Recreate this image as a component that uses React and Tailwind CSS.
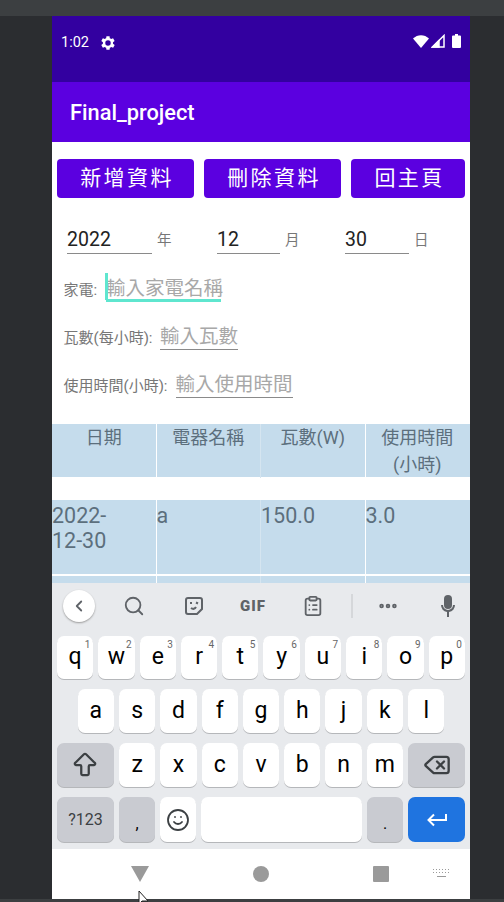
import { Search, ChevronLeft, ClipboardList, MoreHorizontal, Smile, Delete, ArrowBigUp } from "lucide-react";

const font = "font-['Roboto','Noto_Sans_CJK_TC',sans-serif]";

const row1 = [
  ["q", "1"], ["w", "2"], ["e", "3"], ["r", "4"], ["t", "5"],
  ["y", "6"], ["u", "7"], ["i", "8"], ["o", "9"], ["p", "0"],
];
const row2 = ["a", "s", "d", "f", "g", "h", "j", "k", "l"];
const row3 = ["z", "x", "c", "v", "b", "n", "m"];

function Key({ label, hint, className = "w-[36.3px]", gray, h = "h-[44px]", children }) {
  return (
    <div
      className={`relative flex items-center justify-center rounded-[7px] text-[23px] text-black shadow-[0_1px_0_#b5b7ba] ${h} ${className} ${gray ? "bg-[#c9cbd1]" : "bg-white"}`}
    >
      {label}
      {children}
      {hint && <span className="absolute right-[3px] top-[1px] text-[10px] text-[#666]">{hint}</span>}
    </div>
  );
}

function Keyboard() {
  return (
    <div className="h-[266px] bg-[#e8eaed]">
      <div className="flex h-[46px] items-center pl-[11px] text-[#5f6368]">
        <div className="flex h-[32px] w-[32px] items-center justify-center rounded-full bg-white shadow-[0_1px_2px_#9a9a9a]">
          <ChevronLeft size={18} strokeWidth={2.4} />
        </div>
        <div className="ml-[27px] flex w-[24px] justify-center"><Search size={22} strokeWidth={2} /></div>
        <div className="ml-[36px] flex w-[24px] justify-center">
          <svg width="20" height="20" viewBox="0 0 20 20" fill="none" stroke="currentColor" strokeWidth="2">
            <path d="M4 2h12a2 2 0 0 1 2 2v9l-5 5H4a2 2 0 0 1-2-2V4a2 2 0 0 1 2-2z" />
            <path d="M6 7h2M12 6.500l2 1M7 12c2 1.500 4 1 5-1" />
          </svg>
        </div>
        <div className="ml-[34px] w-[26px] text-[15px] font-black tracking-[1px]">GIF</div>
        <div className="ml-[35px] flex w-[24px] justify-center"><ClipboardList size={22} strokeWidth={2} /></div>
        <div className="ml-[26px] h-[24px] w-[2px] bg-[#d5d7da]" />
        <div className="ml-[23px] flex w-[24px] justify-center"><MoreHorizontal size={22} strokeWidth={3} /></div>
        <div className="ml-[36px] flex w-[24px] justify-center">
          <svg width="20" height="24" viewBox="0 0 20 24" fill="currentColor">
            <rect x="6" y="1" width="8" height="14" rx="4" />
            <path d="M3 11h2a5 5 0 0 0 10 0h2a7 7 0 0 1-6 7v5H9v-5a7 7 0 0 1-6-7z" />
          </svg>
        </div>
      </div>
      <div className="mt-[7px] flex flex-col gap-[10px]">
        <div className="flex gap-[5px] px-[5px]">
          {row1.map(([l, n]) => <Key key={l} label={l} hint={n} className="flex-1" h="h-[43px]" />)}
        </div>
        <div className="flex justify-center gap-[5px]">
          {row2.map((l) => <Key key={l} label={l} />)}
        </div>
        <div className="flex gap-[5px] px-[5px]">
          <Key gray className="w-[57px]">
            <ArrowBigUp size={30} strokeWidth={1.8} className="text-[#3c4043]" />
          </Key>
          {row3.map((l) => <Key key={l} label={l} />)}
          <Key gray className="w-[57px]">
            <Delete size={28} strokeWidth={2} className="text-[#3c4043]" />
          </Key>
        </div>
        <div className="flex gap-[5px] px-[5px]">
          <Key gray className="w-[57px] !text-[16px] !text-[#3c4043]" h="h-[45px]" label="?123" />
          <Key gray label="," h="h-[45px]" className="w-[36.3px] items-end pb-[6px] !text-[16px]" />
          <Key h="h-[45px]"><Smile size={24} strokeWidth={1.8} className="text-[#3c4043]" /></Key>
          <Key h="h-[45px]" className="w-[161px]" />
          <Key gray label="." h="h-[45px]" className="w-[36.3px] items-end pb-[6px] !text-[16px]" />
          <div className="flex h-[45px] w-[57px] items-center justify-center rounded-[7px] bg-[#1f74e0] text-white">
            <svg width="21" height="14" viewBox="0 0 21 14" fill="none" stroke="currentColor" strokeWidth="2">
              <path d="M20 1v6H3M8 1.500 2.500 7 8 12.500" />
            </svg>
          </div>
        </div>
      </div>
    </div>
  );
}

function TextRow({ label, placeholder, inputW, labelW, focused, className }) {
  return (
    <div className={`flex items-center ${className}`}>
      <span className={`mt-[6px] text-[15px] leading-[20px] text-[#777] ${labelW}`}>{label}</span>
      <div
        className={`relative flex h-[30px] items-center whitespace-nowrap text-[19.500px] text-[#a8a8a8] ${inputW} ${
          focused ? "border-b-[3px] border-[#5fe6cf] pt-[6px]" : "border-b border-[#8a8a8a] pt-[4px]"
        }`}
      >
        {placeholder}
        {focused && <span className="absolute -bottom-[1px] -left-[1px] h-[27px] w-[3px] bg-[#5fe6cf]" />}
      </div>
    </div>
  );
}

const cellLine = ["border-white", "border-[#d5e5f0]", "border-white", "border-transparent"];

export default function App() {
  return (
    <div className={`relative h-[902px] w-[504px] overflow-hidden bg-[#2b2d30] ${font}`}>
      <div className="h-[16px] bg-[#3c3f41]" />
      <div className="mx-[52px] flex h-[883px] w-[418px] flex-col bg-white">
        {/* status bar */}
        <div className="flex h-[66px] shrink-0 items-start bg-[#3300a0] px-[9px] pt-[18px] text-white">
          <span className="text-[14.500px] leading-[18px]">1:02</span>
          <svg className="ml-[12px] mt-[2px]" width="14" height="14" viewBox="4 3 18 18" fill="currentColor">
            <path d="M19.400 13a7.500 7.500 0 0 0 0-2l2.100-1.600-2-3.500-2.500 1a7.500 7.500 0 0 0-1.700-1L15 3.200h-4l-.4 2.700a7.500 7.500 0 0 0-1.700 1l-2.500-1-2 3.500L6.500 11a7.500 7.500 0 0 0 0 2l-2.100 1.600 2 3.500 2.500-1a7.500 7.500 0 0 0 1.700 1l.4 2.700h4l.4-2.700a7.500 7.500 0 0 0 1.700-1l2.500 1 2-3.500zM13 15.500a3.500 3.500 0 1 1 0-7 3.500 3.500 0 0 1 0 7z" />
          </svg>
          <div className="ml-auto flex items-center gap-[2px]">
            <svg width="16" height="13" viewBox="0 0 16 13" fill="currentColor"><path d="M0 3.500C4.500-1 11.500-1 16 3.500L8 13z" /></svg>
            <svg width="14" height="14" viewBox="0 0 14 14" fill="none" stroke="currentColor" strokeWidth="1.500">
              <path d="M1.500 13 13 1.500V13z" />
              <path d="M1.500 13 8 6.500V13z" fill="currentColor" />
            </svg>
            <svg className="ml-[5px]" width="9" height="14" viewBox="0 0 9 14" fill="currentColor"><path d="M3 0h3v1.500h2a1 1 0 0 1 1 1V13a1 1 0 0 1-1 1H1a1 1 0 0 1-1-1V2.500a1 1 0 0 1 1-1h2z" /></svg>
          </div>
        </div>

        {/* app bar */}
        <div className="flex h-[60px] shrink-0 items-center bg-[#5b00e0] pl-[18px] pt-[2px] text-[21.800px] font-medium text-white">
          Final_project
        </div>

        {/* buttons */}
        <div className="flex gap-[10px] px-[5px] pt-[17px]">
          {["新增資料", "刪除資料", "回主頁"].map((t, i) => (
            <button
              key={t}
              className={`flex h-[39px] items-center justify-center rounded-[4px] bg-[#5b00e0] pl-[3px] text-[21px] tracking-[2.400px] text-white ${i === 2 ? "w-[114px]" : "w-[137px]"}`}
            >
              {t}
            </button>
          ))}
        </div>

        {/* date row */}
        <div className="mt-[23px] flex h-[33px] items-end pl-[15px] text-[19.500px] text-[#222]">
          <span className="w-[85px] border-b border-[#8a8a8a] leading-[26px]">2022</span>
          <span className="ml-[5px] w-[60px] pb-[2px] text-[14.500px] text-[#777]">年</span>
          <span className="w-[63px] border-b border-[#8a8a8a] leading-[26px]">12</span>
          <span className="ml-[5px] w-[60px] pb-[2px] text-[14.500px] text-[#777]">月</span>
          <span className="w-[64px] border-b border-[#8a8a8a] leading-[26px]">30</span>
          <span className="ml-[5px] pb-[2px] text-[14.500px] text-[#777]">日</span>
        </div>

        {/* text fields */}
        <div className="pl-[11.500px]">
          <TextRow className="mt-[18px]" label="家電:" placeholder="輸入家電名稱" labelW="w-[42.500px]" inputW="w-[115px]" focused />
          <TextRow className="mt-[18px]" label="瓦數(每小時):" placeholder="輸入瓦數" labelW="w-[96.500px]" inputW="w-[78px]" />
          <TextRow className="mt-[18px]" label="使用時間(小時):" placeholder="輸入使用時間" labelW="w-[112px]" inputW="w-[117px]" />
        </div>

        {/* table */}
        <div className="mt-[26px] min-h-0 flex-1 overflow-hidden text-[#5c6f7d]">
          <div className="grid h-[53px] grid-cols-4 bg-[#c5dcec] text-center text-[18px] leading-[27px]">
            {["日期", "電器名稱", "瓦數(W)", "使用時間 (小時)"].map((h, i) => (
              <div key={h} className={`border-r px-[14px] ${cellLine[i]}`}>{h}</div>
            ))}
          </div>
          <div className="mt-[23px] grid h-[74px] grid-cols-4 bg-[#c5dcec] text-[21.500px] leading-[24.500px]">
            {["2022-12-30", "a", "150.0", "3.0"].map((v, i) => (
              <div key={v} className={`border-r pt-[4px] ${cellLine[i]} ${i === 0 ? "pr-[30px]" : ""}`}>{v}</div>
            ))}
          </div>
          <div className="mt-[2px] grid h-[8px] grid-cols-4 bg-[#c5dcec]">
            {cellLine.map((c, i) => <div key={i} className={`border-r ${c}`} />)}
          </div>
        </div>

        <div className="shrink-0"><Keyboard /></div>

        {/* nav bar */}
        <div className="relative flex h-[50px] shrink-0 items-center bg-white text-[#9a9a9a]">
          <svg className="ml-[79px]" width="18" height="16" viewBox="0 0 18 16" fill="currentColor"><path d="M0 0h18L9 16z" /></svg>
          <div className="ml-[104px] h-[16px] w-[16px] rounded-full bg-[#9a9a9a]" />
          <div className="ml-[104px] h-[16px] w-[16px] rounded-[1px] bg-[#9a9a9a]" />
          <svg className="ml-[44px]" width="17" height="10" viewBox="0 0 17 10" fill="currentColor">
            <path d="M0 0h1v1H0zM3 0h1v1H3zM6 0h1v1H6zM9 0h1v1H9zM12 0h1v1h-1zM15 0h1v1h-1zM0 3h1v1H0zM3 3h1v1H3zM6 3h1v1H6zM9 3h1v1H9zM12 3h1v1h-1zM15 3h1v1h-1zM4 7h9v1H4z" />
          </svg>
        </div>
      </div>
      <div className="h-[3px] bg-[#3c3f41]" />

      {/* mouse pointer from the recording */}
      <svg className="absolute left-[138px] top-[890px]" width="13" height="14" viewBox="0 0 13 14">
        <path d="M1 1v13l3-3h6z" fill="#fff" stroke="#222" strokeWidth="1" />
      </svg>
    </div>
  );
}
